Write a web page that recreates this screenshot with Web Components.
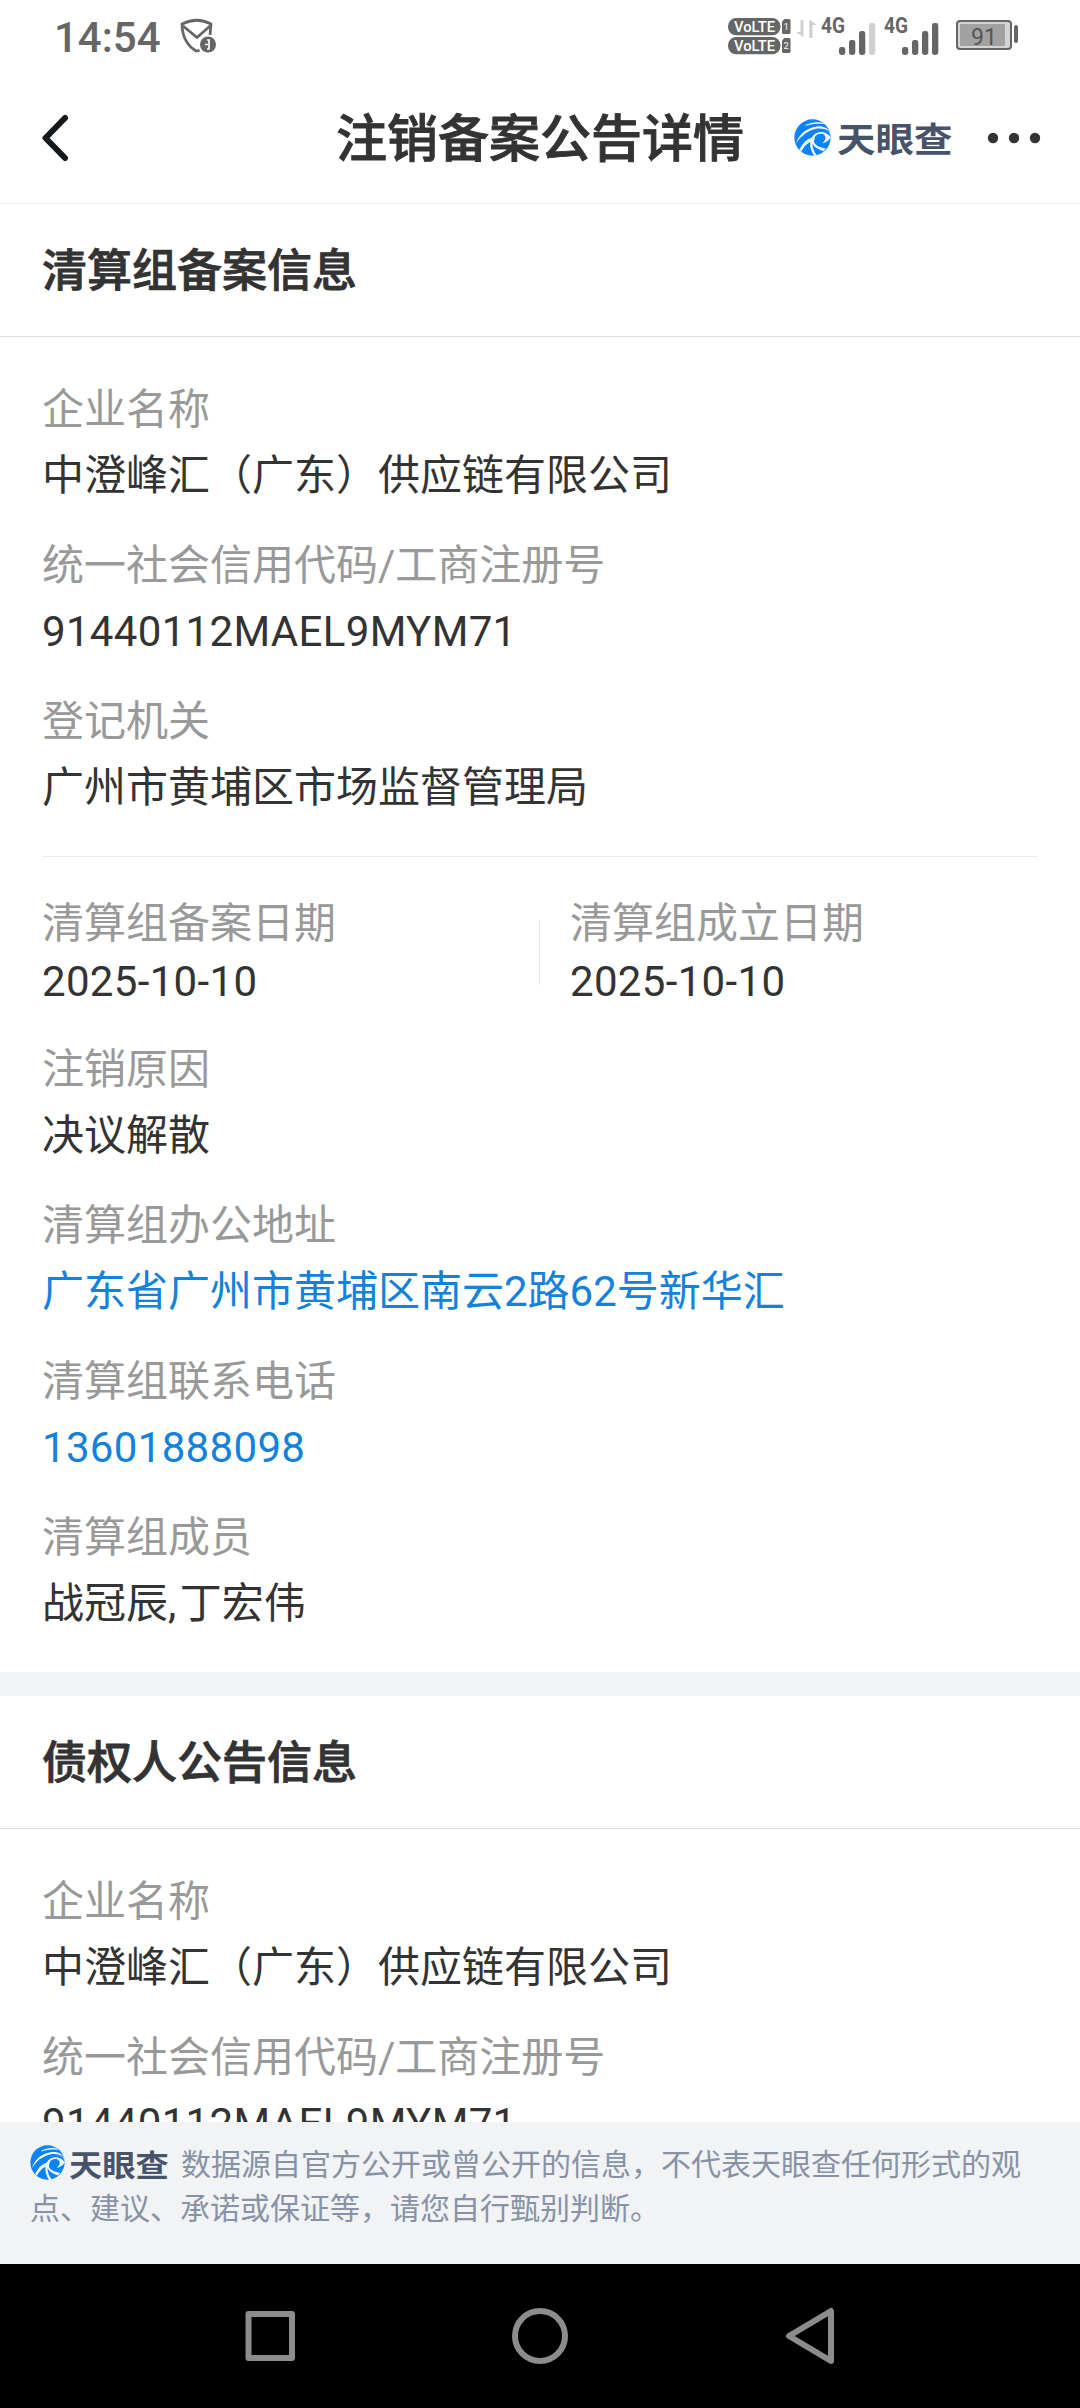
<!DOCTYPE html>
<html lang="zh-CN">
<head>
<meta charset="utf-8">
<title>注销备案公告详情</title>
<style>
  html, body { margin: 0; padding: 0; background: #fff; }
  body { width: 1080px; height: 2408px; overflow: hidden; font-family: Roboto, "Noto Sans CJK SC", sans-serif; color: #333; }
  .comma { letter-spacing: 3.500px; }
</style>
</head>
<body>
<app-screen>
  <status-bar slot="top"></status-bar>
  <nav-header slot="top">注销备案公告详情</nav-header>

  <info-section heading="清算组备案信息">
    <info-field label="企业名称">中澄峰汇（广东）供应链有限公司</info-field>
    <info-field numeric label="统一社会信用代码/工商注册号">91440112MAEL9MYM71</info-field>
    <info-field label="登记机关">广州市黄埔区市场监督管理局</info-field>
    <field-pair>
      <info-field compact numeric label="清算组备案日期">2025-10-10</info-field>
      <info-field compact numeric label="清算组成立日期">2025-10-10</info-field>
    </field-pair>
    <info-field label="注销原因">决议解散</info-field>
    <info-field link label="清算组办公地址">广东省广州市黄埔区南云2路62号新华汇</info-field>
    <info-field link numeric label="清算组联系电话">13601888098</info-field>
    <info-field label="清算组成员">战冠辰<span class="comma">,</span>丁宏伟</info-field>
  </info-section>
  <info-section heading="债权人公告信息">
    <info-field label="企业名称">中澄峰汇（广东）供应链有限公司</info-field>
    <info-field numeric label="统一社会信用代码/工商注册号">91440112MAEL9MYM71</info-field>
  </info-section>

  <source-note slot="bottom">数据源自官方公开或曾公开的信息，不代表天眼查任何形式的观<br>点、建议、承诺或保证等，请您自行甄别判断。</source-note>
  <system-nav slot="bottom"></system-nav>
</app-screen>

<script>
const define = (name, html) => {
  const tpl = document.createElement('template');
  tpl.innerHTML = html;
  customElements.define(name, class extends HTMLElement {
    constructor() {
      super();
      this.attachShadow({ mode: 'open' }).append(tpl.content.cloneNode(true));
    }
    connectedCallback() {
      for (const key of ['label', 'heading']) {
        const el = this.shadowRoot.getElementById(key);
        if (el) el.textContent = this.getAttribute(key) || '';
      }
    }
  });
};

define('app-screen', `
  <style>
    :host { display: flex; flex-direction: column; width: 1080px; height: 2408px; background: #fff; }
    header, footer { flex: none; }
    main { flex: 1; min-height: 0; overflow: hidden; display: flex; flex-direction: column; gap: 24px; background: #f1f3f5; }
  </style>
  <header><slot name="top"></slot></header>
  <main><slot></slot></main>
  <footer><slot name="bottom"></slot></footer>`);

define('brand-logo', `
  <style>
    :host { display: inline-flex; align-items: center; gap: var(--logo-gap, 6px); font-size: var(--logo-font, 38.5px); color: #46536a; }
    svg { width: var(--logo-mark, 37px); height: var(--logo-mark, 37px); flex: none; }
    span { font-family: "Noto Sans CJK SC", sans-serif; font-weight: 700; line-height: 1; transform: scaleY(.9); white-space: nowrap; }
  </style>
  <svg viewBox="0 0 100 100">
    <circle cx="50" cy="50" r="49" fill="#0b84fb"/>
    <g fill="#fff">
      <path d="M32 17 Q56 5 80 12 Q56 10 32 17Z" stroke="#fff" stroke-width="1.500"/>
      <path d="M5 66 Q20 26 62 20 Q84 18 95 32 Q80 24 62 26 Q28 32 5 66Z"/>
      <path d="M96 34 Q100 42 99 50 Q92 62 76 66 Q88 56 84 46 Q78 36 64 42 Q54 48 54 62 Q58 74 86 80 L80 87 Q56 80 50 66 Q50 84 62 98 L54 99 Q42 82 44 62 Q28 70 20 88 L14 82 Q24 58 44 50 Q52 32 72 30 Q86 28 96 34Z" fill-opacity=".93"/>
    </g>
    <path d="M58 46 Q70 36 80 44 Q84 54 70 60 Q76 70 92 72 Q86 78 76 76 Q58 70 56 60Z" fill="#0b84fb"/>
    <path d="M60 32 Q78 24 94 34 Q99 42 98 48 Q88 34 72 35 Q56 36 48 50 Q26 58 15 82 L10 76 Q22 46 60 32Z" fill="#0b84fb"/>
  </svg>
  <span>天眼查</span>`);

define('signal-bars', `
  <style>
    :host { display: flex; width: 55px; height: 48px; margin-top: -8px; }
    svg { display: block; }
    text { font: 700 22px Roboto, sans-serif; fill: #666; }
    :host([weak]) .last { fill: #d0d0d0; }
  </style>
  <svg width="55" height="48" viewBox="0 -8 55 48">
    <text x="0" y="17" textLength="24" lengthAdjust="spacingAndGlyphs">4G</text>
    <g fill="#666">
      <rect x="18" y="31" width="6.3" height="8" rx="2.4"/>
      <rect x="28" y="24" width="6.3" height="15" rx="2.4"/>
      <rect x="38" y="15" width="6.3" height="24" rx="2.4"/>
      <rect class="last" x="48" y="7" width="6.3" height="32" rx="2.4"/>
    </g>
  </svg>`);

define('status-bar', `
  <style>
    :host { display: flex; height: 72px; box-sizing: border-box; padding: 16px 61px 0 54px; color: #666; align-items: flex-start; }
    time { font: 500 42px/44px Roboto, sans-serif; }
    svg { display: block; flex: none; }
    .shield { margin: 2px 0 0 19px; }
    .right { display: flex; margin-left: auto; align-items: flex-start; }
    .volte text { font-family: Roboto, sans-serif; fill: #fff; }
    .arrows { margin: 2px 4px 0 5px; }
    signal-bars + signal-bars { margin-left: 8px; }
    .battery { margin: 4px 1px 0 17px; }
    .battery text { font: 400 24px Roboto, sans-serif; fill: #555; }
  </style>
  <time>14:54</time>
  <svg class="shield" width="37" height="36" viewBox="0 0 37 36">
    <g fill="none" stroke="#666" stroke-width="2.8" stroke-linejoin="round">
      <path d="M17 33.4 C8 29 2 19 2 6 Q17 -1.5 31 6 L30 17"/>
      <path d="M3 8 L17 19.5 L30 8"/>
      <path d="M17 33.4 L19.5 32"/>
    </g>
    <circle cx="28" cy="26.5" r="8" fill="#666"/>
    <path d="M27 22 H29 V31 H27 M25 26.5 H28" fill="none" stroke="#fff" stroke-width="1.700"/>
  </svg>
  <div class="right">
    <svg class="volte" width="63" height="40" viewBox="0 0 63 40">
      <g fill="#666">
        <rect x="0" y="2" width="52.5" height="17.3" rx="8.2"/>
        <rect x="0" y="21" width="52.5" height="17.3" rx="8.2"/>
        <path d="M56.5 3 H61 Q62.5 3 62.5 4.5 V16.500 Q62.5 18 61 18 H55.500 Q54 18 54 16.500 V5.500Z"/>
        <path d="M56.5 22 H61 Q62.5 22 62.5 23.500 V35.500 Q62.5 37 61 37 H55.500 Q54 37 54 35.500 V24.500Z"/>
      </g>
      <g font-size="15.500" font-weight="500">
        <text x="6" y="16.300" textLength="41" lengthAdjust="spacingAndGlyphs">VoLTE</text>
        <text x="6" y="35.300" textLength="41" lengthAdjust="spacingAndGlyphs">VoLTE</text>
      </g>
      <g font-size="9.500"><text x="55.500" y="14">1</text><text x="55.500" y="33">2</text></g>
    </svg>
    <svg class="arrows" width="21" height="20" viewBox="0 0 21 20" fill="#d0d0d0">
      <path d="M4.500 2 H7.500 V19 L0 14 H4.500Z"/>
      <path d="M13.300 20 H16.500 V7 H21 L13.300 1.500Z"/>
    </svg>
    <signal-bars weak></signal-bars>
    <signal-bars></signal-bars>
    <svg class="battery" width="62" height="30" viewBox="0 0 62 30">
      <rect x="1" y="1" width="54" height="28" rx="3" fill="#d4d4d4" stroke="#666" stroke-width="2"/>
      <rect x="4" y="4" width="45" height="22" fill="#a2a2a2"/>
      <rect x="58" y="5" width="4" height="18" rx="2" fill="#666"/>
      <text x="15" y="25" textLength="26" lengthAdjust="spacingAndGlyphs">91</text>
    </svg>
  </div>`);

define('nav-header', `
  <style>
    :host { display: grid; grid-template-columns: 336px 408px 1fr; align-items: center; height: 132px; box-sizing: border-box; border-bottom: 1px solid #ebebeb; }
    svg { display: block; }
    .back { margin: 1px 0 0 41px; }
    h1 { margin: 5px 0 0; font-size: 51px; line-height: 60px; font-weight: 500; -webkit-text-stroke: .9px #333; color: #333; white-space: nowrap; }
    .side { display: flex; align-items: center; margin-left: 50px; gap: 34px; }
  </style>
  <svg class="back" width="30" height="48" viewBox="0 0 30 48"><path d="M24 4 L4.500 24 L24 44" fill="none" stroke="#16191c" stroke-width="6" stroke-linecap="round" stroke-linejoin="round"/></svg>
  <h1><slot></slot></h1>
  <div class="side">
    <brand-logo></brand-logo>
    <svg width="54" height="12" viewBox="0 0 54 12" fill="#333"><circle cx="6" cy="6" r="5.200"/><circle cx="27" cy="6" r="5.200"/><circle cx="48" cy="6" r="5.200"/></svg>
  </div>`);

define('info-section', `
  <style>
    :host { display: block; flex: none; background: #fff; }
    h2 { margin: 0; height: 133px; box-sizing: border-box; padding: 3px 42px 0; line-height: 129px; font-size: 45px; font-weight: 500; -webkit-text-stroke: .8px #333; color: #333; border-bottom: 1px solid #dedede; }
    .body { display: flex; flex-direction: column; gap: 30px; padding: 43px 42px 38px; }
  </style>
  <h2 id="heading"></h2>
  <div class="body"><slot></slot></div>`);

define('info-field', `
  <style>
    :host { display: flex; flex-direction: column; gap: 6px; font-size: 42px; line-height: 60px; white-space: nowrap; }
    #label { color: #999; }
    .value { color: #333; }
    :host([link]) .value { color: #1482dc; }
    :host([numeric]) .value { letter-spacing: .33px; }
    :host([compact]) { gap: 0; }
    :host([compact]) .value { line-height: 56px; }
  </style>
  <div id="label"></div>
  <div class="value"><slot></slot></div>`);

define('field-pair', `
  <style>
    :host { display: grid; grid-template-columns: 497px 1fr; align-items: start; border-top: 1px solid #ebebeb; padding-top: 37px; margin-top: 8px; }
    ::slotted(:last-child) { padding-left: 31px; background: linear-gradient(#e5e5e5, #e5e5e5) 0 26px / 1px 65px no-repeat; }
  </style>
  <slot></slot>`);

define('source-note', `
  <style>
    :host { display: block; height: 142px; box-sizing: border-box; padding: 21px 30px 0; background: #f1f3f5; color: #8792a5; font-size: 30px; line-height: 44px; white-space: nowrap; }
    brand-logo { --logo-mark: 35px; --logo-font: 33.300px; --logo-gap: 4px; vertical-align: -5px; height: 35px; margin-right: 12px; }
  </style>
  <brand-logo></brand-logo><slot></slot>`);

define('system-nav', `
  <style>
    :host { display: grid; grid-template-columns: repeat(3, 270px); justify-content: center; align-items: center; justify-items: center; height: 144px; background: #000; }
    svg { fill: none; stroke: #8c8c8c; stroke-width: 6; stroke-linejoin: round; display: block; }
  </style>
  <svg width="60" height="60" viewBox="0 0 60 60"><rect x="8.500" y="8" width="43.500" height="44"/></svg>
  <svg width="60" height="60" viewBox="0 0 60 60"><circle cx="30" cy="30" r="25"/></svg>
  <svg width="60" height="60" viewBox="0 0 60 60"><path d="M9 30 L51 5 V55Z"/></svg>`);
</script>
</body>
</html>
